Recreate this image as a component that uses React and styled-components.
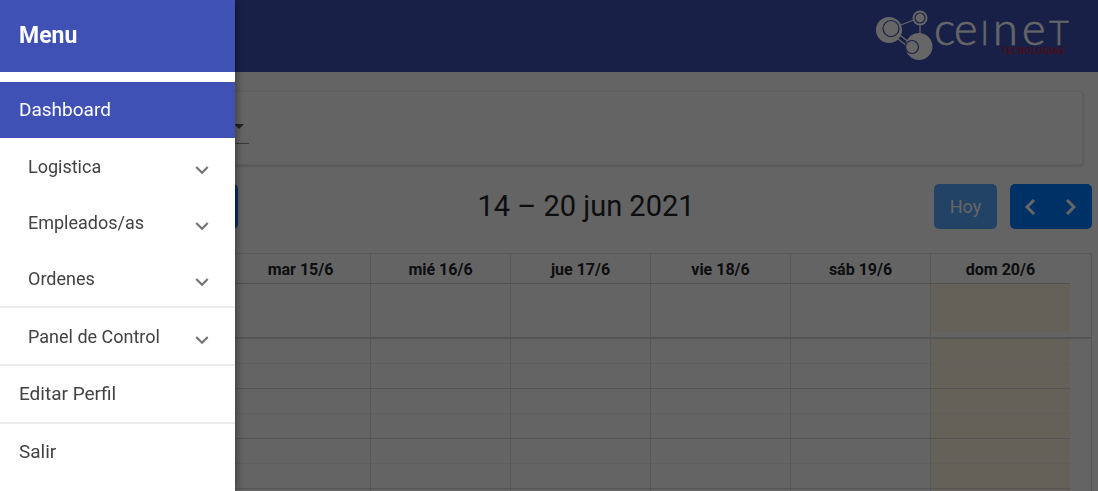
import React from "react";
import styled, { createGlobalStyle } from "styled-components";

const GlobalStyle = createGlobalStyle`
  * { box-sizing: border-box; }
  body { margin: 0; background: #fafafa; font-family: Roboto, "Liberation Sans", sans-serif; color: #212529; }
  button, select { font: inherit; }
`;

const Page = styled.div`
  height: 100vh;
  overflow: hidden;
`;

const TopBar = styled.header`
  display: flex;
  align-items: center;
  justify-content: flex-end;
  height: 72px;
  padding: 0 24px;
  background: #3f51b5;
`;

const Logo = styled.svg`
  display: block;
  width: 200px;
  height: 72px;
  overflow: visible;
`;

const Main = styled.main`
  padding: 19px 6px 0;
`;

const FilterCard = styled.section`
  height: 74px;
  margin: 0 9px;
  padding: 24px 20px;
  border: 1px solid #ededed;
  border-radius: 4px;
  background: #fbfbfb;
  box-shadow: 0 1px 3px rgba(0, 0, 0, 0.2);
`;

const SelectField = styled.div`
  display: flex;
  align-items: center;
  width: 213px;
  height: 28px;
  border-bottom: 1px solid #8f8f8f;
`;

const Select = styled.select`
  flex: 1;
  border: 0;
  appearance: none;
  background: transparent;
`;

const Caret = styled.span`
  margin: 0 5px 6px 0;
  border: 5px solid transparent;
  border-top-color: #555;
  border-bottom: 0;
`;

const Toolbar = styled.div`
  display: flex;
  align-items: center;
  justify-content: space-between;
  margin: 19px 0 24px;
`;

const Title = styled.h2`
  margin: 0;
  font-size: 29px;
  line-height: 45px;
  font-weight: 400;
`;

const ButtonGroup = styled.div`
  display: flex;
  gap: ${(p) => p.$gap || 0};
`;

const CalButton = styled.button`
  display: flex;
  align-items: center;
  justify-content: center;
  width: ${(p) => p.$width};
  height: 45px;
  padding: 0;
  border: 0;
  border-radius: ${(p) => p.$radius || "5px"};
  background: #007bff;
  color: #fff;
  font-size: 18px;
  opacity: ${(p) => (p.disabled ? 0.65 : 1)};
`;

const Calendar = styled.table`
  width: 100%;
  table-layout: fixed;
  border-collapse: separate;
  border-spacing: 0;
  border: 1px solid #ddd;
`;

const DayHeader = styled.th`
  height: 30px;
  padding: 2px 0 0;
  border-left: 1px solid #ddd;
  border-bottom: 1px solid #c8c8c8;
  font-size: 16px;
  font-weight: 700;
`;

const Slot = styled.td`
  height: ${(p) => p.$height};
  padding: 0;
  border-left: 1px solid #ddd;
  border-bottom: ${(p) => p.$line || "0"};
  background: ${(p) => (p.$today ? "#fbf3dd" : "transparent")};
`;

const Gutter = styled.td`
  padding: 0;
  border-bottom: ${(p) => p.$line || "0"};
`;

const Backdrop = styled.div`
  position: fixed;
  inset: 0;
  background: rgba(0, 0, 0, 0.6);
`;

const Drawer = styled.aside`
  position: fixed;
  top: 0;
  bottom: 0;
  left: 0;
  width: 235px;
  background: #fff;
  box-shadow: 2px 0 8px rgba(0, 0, 0, 0.4);
`;

const DrawerTitle = styled.h1`
  margin: 0 0 10px;
  padding: 0 19px;
  background: #3f51b5;
  color: #fff;
  font-size: 23px;
  line-height: 72px;
  font-weight: 700;
`;

const itemStyle = `
  display: flex;
  align-items: center;
  justify-content: space-between;
  width: 100%;
  height: 56px;
  border: 0;
  background: transparent;
  color: #424242;
  text-decoration: none;
`;

const NavLink = styled.a`
  ${itemStyle}
  padding: 0 19px 2px;
  font-size: 19px;
  ${(p) => p.$active && "background: #3f51b5; color: #fff;"}
`;

const NavToggle = styled.button`
  ${itemStyle}
  padding: 0 20px 0 28px;
  font-size: 18px;
`;

const Divider = styled.hr`
  height: 2px;
  margin: 0;
  border: 0;
  background: #ececec;
`;

const ChevronIcon = styled.svg`
  width: 26px;
  height: 26px;
  margin-top: 8px;
  fill: #757575;
`;

const Expand = () => (
  <ChevronIcon viewBox="0 0 24 24" aria-hidden="true">
    <path d="M16.59 8.59 12 13.17 7.41 8.59 6 10l6 6 6-6z" />
  </ChevronIcon>
);

const Arrow = ({ d }) => (
  <svg width="14" height="18" viewBox="0 0 14 18" fill="none" stroke="#fff" strokeWidth="3" aria-hidden="true">
    <path d={d} />
  </svg>
);

const CelnetLogo = () => (
  <Logo viewBox="0 -8 200 72" role="img" aria-label="celnet">
    <g stroke="#fff" strokeWidth="1.2" fill="none">
      <path d="M24 18 40 12M46 15V26M22 24 36 35M19 27 33 38" />
    </g>
    <g fill="#fff">
      <circle cx="15" cy="22" r="13" />
      <circle cx="46" cy="10" r="7.5" />
      <circle cx="45" cy="38.5" r="13.5" />
    </g>
    <g fill="none" stroke="#3f51b5" strokeWidth="1.2">
      <circle cx="17" cy="20.5" r="8" />
      <circle cx="46" cy="10" r="5" />
      <circle cx="38" cy="39" r="6.5" />
    </g>
    <g fill="#fff" stroke="#fff" strokeWidth="0.6" fontFamily="Lato, sans-serif" fontWeight="300">
      <text y="37" fontSize="45" x="60">
        c<tspan x="80">e</tspan>
        <tspan x="107" fontSize="33">l</tspan>
        <tspan x="119">n</tspan>
        <tspan x="148">e</tspan>
        <tspan x="175" fontSize="34">T</tspan>
      </text>
    </g>
    <text x="127" y="46" fill="#a32a48" fontFamily="'DejaVu Sans', sans-serif" fontWeight="700" fontSize="8">TECNOLOGIAS</text>
  </Logo>
);

const days = ["", "mar 15/6", "mié 16/6", "jue 17/6", "vie 18/6", "sáb 19/6", "dom 20/6"];
const SOLID = "1px solid #d2d2d2";
const DOTTED = "1px dotted #e2e2e2";

const CalendarRow = ({ height, line, today = true, gutterLine }) => (
  <tr>
    <Gutter $line={line} />
    {days.map((d, i) => (
      <Slot key={d} $height={height} $line={line} $today={today && i === 6} />
    ))}
    <Gutter $line={gutterLine} />
  </tr>
);

export default function App() {
  return (
    <>
      <GlobalStyle />
      <Page>
        <TopBar>
          <CelnetLogo />
        </TopBar>
        <Main>
          <FilterCard>
            <SelectField>
              <Select aria-label="Filtro" />
              <Caret />
            </SelectField>
          </FilterCard>
          <Toolbar>
            <ButtonGroup>
              <CalButton $width="232px" aria-label="Vista" />
            </ButtonGroup>
            <Title>14 – 20 jun 2021</Title>
            <ButtonGroup $gap="13px">
              <CalButton $width="63px" disabled>Hoy</CalButton>
              <ButtonGroup>
                <CalButton $width="41px" $radius="5px 0 0 5px" aria-label="Anterior">
                  <Arrow d="M11 2 4 9l7 7" />
                </CalButton>
                <CalButton $width="41px" $radius="0 5px 5px 0" aria-label="Siguiente">
                  <Arrow d="m3 2 7 7-7 7" />
                </CalButton>
              </ButtonGroup>
            </ButtonGroup>
          </Toolbar>
          <Calendar>
            <colgroup>
              <col style={{ width: 83 }} />
              {days.map((d) => <col key={d} />)}
              <col style={{ width: 21 }} />
            </colgroup>
            <thead>
              <tr>
                <Gutter as="th" />
                {days.map((d) => <DayHeader key={d} scope="col">{d}</DayHeader>)}
                <Gutter />
              </tr>
            </thead>
            <tbody>
              <CalendarRow height="48px" />
              <CalendarRow height="7px" line="2px solid #d2d2d2" gutterLine="2px solid #d2d2d2" today={false} />
              {[0, 1, 2, 3].map((h) => (
                <React.Fragment key={h}>
                  <CalendarRow height="25px" line={DOTTED} />
                  <CalendarRow height="25px" line={SOLID} />
                </React.Fragment>
              ))}
            </tbody>
          </Calendar>
        </Main>
      </Page>
      <Backdrop />
      <Drawer>
        <DrawerTitle>Menu</DrawerTitle>
        <nav>
          <NavLink href="#dashboard" $active>Dashboard</NavLink>
          <NavToggle>Logistica<Expand /></NavToggle>
          <NavToggle>Empleados/as<Expand /></NavToggle>
          <NavToggle>Ordenes<Expand /></NavToggle>
          <Divider />
          <NavToggle>Panel de Control<Expand /></NavToggle>
          <Divider />
          <NavLink href="#perfil">Editar Perfil</NavLink>
          <Divider />
          <NavLink href="#salir">Salir</NavLink>
        </nav>
      </Drawer>
    </>
  );
}
